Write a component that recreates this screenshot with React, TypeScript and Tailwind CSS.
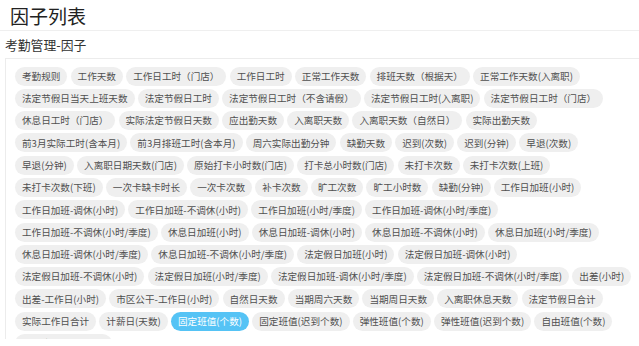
import React from "react";

const rows: string[][] = [
  ["考勤规则", "工作天数", "工作日工时（门店）", "工作日工时", "正常工作天数", "排班天数（根据天）", "正常工作天数(入离职)"],
  ["法定节假日当天上班天数", "法定节假日工时", "法定节假日工时（不含请假）", "法定节假日工时(入离职)", "法定节假日工时（门店）"],
  ["休息日工时（门店）", "实际法定节假日天数", "应出勤天数", "入离职天数", "入离职天数（自然日）", "实际出勤天数"],
  ["前3月实际工时(含本月)", "前3月排班工时(含本月)", "周六实际出勤分钟", "缺勤天数", "迟到(次数)", "迟到(分钟)", "早退(次数)"],
  ["早退(分钟)", "入离职日期天数(门店)", "原始打卡小时数(门店)", "打卡总小时数(门店)", "未打卡次数", "未打卡次数(上班)"],
  ["未打卡次数(下班)", "一次卡缺卡时长", "一次卡次数", "补卡次数", "旷工次数", "旷工小时数", "缺勤(分钟)", "工作日加班(小时)"],
  ["工作日加班-调休(小时)", "工作日加班-不调休(小时)", "工作日加班(小时/季度)", "工作日加班-调休(小时/季度)"],
  ["工作日加班-不调休(小时/季度)", "休息日加班(小时)", "休息日加班-调休(小时)", "休息日加班-不调休(小时)", "休息日加班(小时/季度)"],
  ["休息日加班-调休(小时/季度)", "休息日加班-不调休(小时/季度)", "法定假日加班(小时)", "法定假日加班-调休(小时)"],
  ["法定假日加班-不调休(小时)", "法定假日加班(小时/季度)", "法定假日加班-调休(小时/季度)", "法定假日加班-不调休(小时/季度)", "出差(小时)"],
  ["出差-工作日(小时)", "市区公干-工作日(小时)", "自然日天数", "当期周六天数", "当期周日天数", "入离职休息天数", "法定节假日合计"],
  ["实际工作日合计", "计薪日(天数)", "固定班值(个数)", "固定班值(迟到个数)", "弹性班值(个数)", "弹性班值(迟到个数)", "自由班值(个数)"],
  ["自由班值(迟到个数)"],
];

const items = rows.flat();

export default function App() {
  return (
    <div
      className="w-[639px] h-[346px] overflow-hidden bg-white [text-spacing-trim:space-all]"
      style={{ fontFamily: '"Noto Sans CJK SC", "Noto Sans", sans-serif' }}
    >
      <div className="h-[31px] border-b border-[#efefef] pl-[10px] text-[19px] leading-[31px] text-[#222]">
        因子列表
      </div>
      <div className="h-[27px] pl-[5px] text-[12.8px] leading-[27px] text-[#333]">考勤管理-因子</div>
      <div className="h-[281px] overflow-hidden">
        <div className="ml-[5px] w-[660px] border border-[#ececec] pl-[9px] pt-[7.5px] pb-[8px]">
          <div className="w-[621px] flex flex-wrap gap-x-[3.2px] gap-y-[3.3px]">
            {items.map((t) => {
              const active = t === "固定班值(个数)";
              return (
                <span
                  key={t}
                  className={
                    active
                      ? "inline-flex items-center h-[19px] px-[7px] rounded-full bg-[#55c3f5] text-white text-[9.6px] whitespace-nowrap"
                      : "inline-flex items-center h-[19px] px-[7px] rounded-full bg-[#efefef] text-[#505050] text-[9.6px] whitespace-nowrap"
                  }
                >
                  {t}
                </span>
              );
            })}
          </div>
        </div>
      </div>
    </div>
  );
}
